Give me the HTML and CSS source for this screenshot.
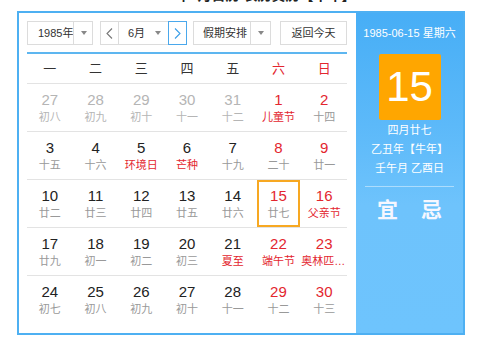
FILE: index.html
```
<!DOCTYPE html>
<html lang="zh">
<head>
<meta charset="utf-8">
<title>万年历</title>
<link rel="stylesheet" href="styles.css">
</head>
<body>
<div class="title">1985年6月日历 农历黄历【牛年】</div>
<div class="cal">
  <div class="main">
    <div class="toolbar">
      <div class="sel year"><span class="sel-text">1985年</span><span class="sel-arrow"><i class="tri"></i></span></div>
      <div class="mgroup">
        <div class="nav prev"><svg width="7" height="11" viewBox="0 0 7 11"><path d="M6 0.5 L1 5.5 L6 10.5" fill="none" stroke="#777" stroke-width="1.1"/></svg></div>
        <div class="msel"><span class="sel-text">6月</span><span class="msel-arrow"><i class="tri"></i></span></div>
        <div class="nav next"><svg width="7" height="11" viewBox="0 0 7 11"><path d="M1 0.5 L6 5.5 L1 10.5" fill="none" stroke="#3a9ee8" stroke-width="1.1"/></svg></div>
      </div>
      <div class="sel holiday"><span class="sel-text">假期安排</span><span class="sel-arrow"><i class="tri"></i></span></div>
      <div class="today">返回今天</div>
    </div>
    <div class="rule"></div>
    <div class="weekdays">
      <span>一</span><span>二</span><span>三</span><span>四</span><span>五</span><span class="red">六</span><span class="red">日</span>
    </div>
    <div class="week">
      <div class="cell other"><div class="n">27</div><div class="l">初八</div></div>
      <div class="cell other"><div class="n">28</div><div class="l">初九</div></div>
      <div class="cell other"><div class="n">29</div><div class="l">初十</div></div>
      <div class="cell other"><div class="n">30</div><div class="l">十一</div></div>
      <div class="cell other"><div class="n">31</div><div class="l">十二</div></div>
      <div class="cell wk fest"><div class="n">1</div><div class="l">儿童节</div></div>
      <div class="cell wk"><div class="n">2</div><div class="l">十四</div></div>
    </div>
    <div class="week">
      <div class="cell"><div class="n">3</div><div class="l">十五</div></div>
      <div class="cell"><div class="n">4</div><div class="l">十六</div></div>
      <div class="cell fest"><div class="n">5</div><div class="l">环境日</div></div>
      <div class="cell fest"><div class="n">6</div><div class="l">芒种</div></div>
      <div class="cell"><div class="n">7</div><div class="l">十九</div></div>
      <div class="cell wk"><div class="n">8</div><div class="l">二十</div></div>
      <div class="cell wk"><div class="n">9</div><div class="l">廿一</div></div>
    </div>
    <div class="week">
      <div class="cell"><div class="n">10</div><div class="l">廿二</div></div>
      <div class="cell"><div class="n">11</div><div class="l">廿三</div></div>
      <div class="cell"><div class="n">12</div><div class="l">廿四</div></div>
      <div class="cell"><div class="n">13</div><div class="l">廿五</div></div>
      <div class="cell"><div class="n">14</div><div class="l">廿六</div></div>
      <div class="cell wk selected"><div class="n">15</div><div class="l">廿七</div></div>
      <div class="cell wk fest"><div class="n">16</div><div class="l">父亲节</div></div>
    </div>
    <div class="week">
      <div class="cell"><div class="n">17</div><div class="l">廿九</div></div>
      <div class="cell"><div class="n">18</div><div class="l">初一</div></div>
      <div class="cell"><div class="n">19</div><div class="l">初二</div></div>
      <div class="cell"><div class="n">20</div><div class="l">初三</div></div>
      <div class="cell fest"><div class="n">21</div><div class="l">夏至</div></div>
      <div class="cell wk fest"><div class="n">22</div><div class="l">端午节</div></div>
      <div class="cell wk fest"><div class="n">23</div><div class="l">奥林匹克日</div></div>
    </div>
    <div class="week last">
      <div class="cell"><div class="n">24</div><div class="l">初七</div></div>
      <div class="cell"><div class="n">25</div><div class="l">初八</div></div>
      <div class="cell"><div class="n">26</div><div class="l">初九</div></div>
      <div class="cell"><div class="n">27</div><div class="l">初十</div></div>
      <div class="cell"><div class="n">28</div><div class="l">十一</div></div>
      <div class="cell wk"><div class="n">29</div><div class="l">十二</div></div>
      <div class="cell wk"><div class="n">30</div><div class="l">十三</div></div>
    </div>
  </div>
  <div class="side">
    <div class="date">1985-06-15 星期六</div>
    <div class="big">15</div>
    <div class="lines">
      <div>四月廿七</div>
      <div>乙丑年【牛年】</div>
      <div>壬午月 乙酉日</div>
    </div>
    <div class="sep"></div>
    <div class="yj"><span>宜</span><span>忌</span></div>
  </div>
</div>
</body>
</html>
```
FILE: styles.css
```
body {
  margin: 0;
  background: #fff;
  font-family: "Liberation Sans", "Noto Sans CJK SC", sans-serif;
  color: #333;
}
.title {
  height: 14px;
  line-height: 14px;
  margin-top: -12px;
  padding-left: 22px;
  font-size: 14px;
  font-weight: bold;
  color: #222;
  text-align: center;
  white-space: nowrap;
}
.cal {
  display: flex;
  margin: 9px 0 0 17px;
  width: 448px;
  height: 324px;
  box-sizing: border-box;
  border: 2px solid #4eb0f2;
}
.main {
  width: 337px;
  flex: none;
  box-sizing: border-box;
  padding: 8px 9px 0 8px;
}
.toolbar {
  display: flex;
  height: 24px;
}
.sel {
  display: flex;
  box-sizing: border-box;
  height: 24px;
  border: 1px solid #dcdcdc;
  font-size: 11px;
  color: #333;
  background: #fff;
}
.sel-text {
  flex: 1;
  line-height: 22px;
  white-space: nowrap;
}
.sel-arrow {
  width: 19px;
  flex: none;
  border-left: 1px solid #dcdcdc;
  display: flex;
  align-items: center;
  justify-content: center;
}
.tri {
  width: 0;
  height: 0;
  border-left: 3px solid transparent;
  border-right: 3px solid transparent;
  border-top: 4px solid #888;
}
.year {
  width: 66px;
}
.year .sel-text {
  padding-left: 10px;
}
.mgroup {
  display: flex;
  margin-left: 7px;
  height: 24px;
}
.nav {
  width: 19px;
  box-sizing: border-box;
  border: 1px solid #dcdcdc;
  display: flex;
  align-items: center;
  justify-content: center;
  background: #fff;
}
.nav.next {
  border-color: #4aa8ec;
}
.msel {
  display: flex;
  width: 49px;
  box-sizing: border-box;
  border-top: 1px solid #dcdcdc;
  border-bottom: 1px solid #dcdcdc;
  font-size: 11px;
}
.msel .sel-text {
  padding-left: 9px;
}
.msel-arrow {
  width: 20px;
  display: flex;
  align-items: center;
  justify-content: center;
}
.holiday {
  width: 78px;
  margin-left: 6px;
}
.holiday .sel-text {
  padding-left: 9px;
}
.today {
  width: 67px;
  margin-left: 9px;
  box-sizing: border-box;
  height: 24px;
  border: 1px solid #dcdcdc;
  font-size: 11px;
  line-height: 22px;
  text-align: center;
  color: #333;
}
.rule {
  height: 2px;
  margin-top: 7px;
  background: #5db6f0;
}
.weekdays {
  display: grid;
  grid-template-columns: repeat(7, 1fr);
  height: 30px;
  box-sizing: border-box;
  border-bottom: 1px solid #e3e3e3;
  line-height: 29px;
  font-size: 13px;
  text-align: center;
  color: #333;
}
.red {
  color: #e3262f;
}
.week {
  display: grid;
  grid-template-columns: repeat(7, 1fr);
  height: 48px;
  box-sizing: border-box;
  border-bottom: 1px solid #e3e3e3;
}
.week.last {
  border-bottom: none;
}
.cell {
  min-width: 0;
  text-align: center;
  padding-top: 7px;
  box-sizing: border-box;
}
.n {
  font-size: 15px;
  line-height: 18px;
  color: #222;
}
.l {
  font-size: 11px;
  line-height: 16px;
  color: #999;
  white-space: nowrap;
  overflow: hidden;
  text-overflow: ellipsis;
}
.other .n {
  color: #b5b5b5;
}
.other .l {
  color: #b5b5b5;
}
.wk .n {
  color: #e3262f;
}
.fest .l {
  color: #e3262f;
}
.selected {
  border: 2px solid #f7a822;
  margin: 0 1px;
  padding-top: 5px;
}
.side {
  flex: 1;
  background: linear-gradient(#47aef6 0%, #5cb9f9 35%, #6ec3fc 60%, #6ec4fd 100%);
  color: #fff;
  text-align: center;
  padding-top: 12px;
}
.date {
  font-size: 11px;
  line-height: 16px;
  white-space: nowrap;
}
.big {
  width: 62px;
  height: 66px;
  margin: 13px auto 0;
  background: #ffa600;
  border-radius: 2px;
  font-size: 42px;
  line-height: 66px;
  color: #fff;
}
.lines {
  margin-top: 1px;
  font-size: 11px;
  line-height: 19px;
}
.sep {
  height: 1px;
  margin: 8px 9px 0;
  background: rgba(255, 255, 255, 0.45);
}
.yj {
  display: flex;
  justify-content: center;
  gap: 23px;
  margin-top: 8px;
  font-size: 21px;
  line-height: 30px;
  font-weight: bold;
  color: #f6f7ff;
}
```
